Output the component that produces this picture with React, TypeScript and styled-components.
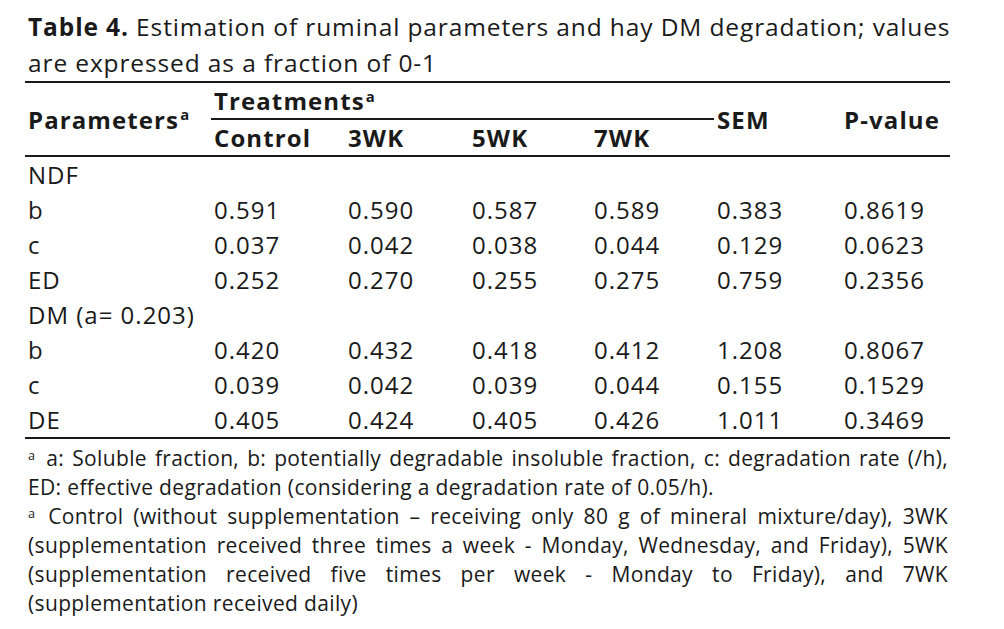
import styled, { createGlobalStyle } from "styled-components";

const GlobalStyle = createGlobalStyle`
  html, body {
    margin: 0;
    padding: 0;
    background: #ffffff;
  }
  body {
    font-family: "Open Sans", "Liberation Sans", sans-serif;
    color: #1a1a1a;
  }
`;

const Page = styled.div`
  width: 925px;
  padding: 9px 0 0 25px;
`;

const Caption = styled.p`
  margin: 0;
  padding-left: 3px;
  font-size: 24.5px;
  line-height: 36px;
  letter-spacing: 0.88px;
  white-space: nowrap;
  border-bottom: 2px solid #1a1a1a;
  b {
    font-weight: 700;
  }
`;

const Table = styled.table`
  width: 925px;
  border-collapse: collapse;
  table-layout: fixed;
  font-size: 24px;
  line-height: 35px;
  letter-spacing: 1px;
  border-bottom: 2px solid #1a1a1a;
`;

const HeadCell = styled.th<{ $rule?: boolean; $tall?: boolean }>`
  padding: 0 0 0 3px;
  text-align: left;
  font-weight: 700;
  letter-spacing: 1.1px;
  white-space: nowrap;
  vertical-align: ${(p) => (p.$tall ? "middle" : "top")};
  height: ${(p) => (p.$tall ? "auto" : "35px")};
  border-bottom: ${(p) => (p.$rule ? "2px solid #1a1a1a" : "none")};
`;

const Cell = styled.td`
  padding: 0 0 0 3px;
  height: 35px;
  white-space: nowrap;
  vertical-align: top;
`;

const Sup = styled.sup`
  font-size: 0.62em;
  line-height: 0;
  vertical-align: 0.55em;
  margin-left: 1px;
`;

const HeadRow = styled.tr<{ $first?: boolean }>`
  height: ${(p) => (p.$first ? "36px" : "35px")};
`;

const Notes = styled.div`
  padding: 5px 2px 0 3px;
  font-size: 21px;
  line-height: 29px;
  letter-spacing: 0.35px;
`;

const Note = styled.p`
  margin: 0;
  text-align: justify;
`;

const NoteMark = styled.span`
  font-size: 0.6em;
  vertical-align: 0.5em;
  line-height: 0;
  margin-right: 3px;
`;

const widths = [186, 134, 124, 122, 123, 127, 109];

type Row = { label: string; values?: string[] };

const rows: Row[] = [
  { label: "NDF" },
  { label: "b", values: ["0.591", "0.590", "0.587", "0.589", "0.383", "0.8619"] },
  { label: "c", values: ["0.037", "0.042", "0.038", "0.044", "0.129", "0.0623"] },
  { label: "ED", values: ["0.252", "0.270", "0.255", "0.275", "0.759", "0.2356"] },
  { label: "DM (a= 0.203)" },
  { label: "b", values: ["0.420", "0.432", "0.418", "0.412", "1.208", "0.8067"] },
  { label: "c", values: ["0.039", "0.042", "0.039", "0.044", "0.155", "0.1529"] },
  { label: "DE", values: ["0.405", "0.424", "0.405", "0.426", "1.011", "0.3469"] },
];

export default function App() {
  return (
    <>
      <GlobalStyle />
      <Page>
        <Caption>
          <b>Table 4.</b> Estimation of ruminal parameters and hay DM degradation; values
          <br />
          are expressed as a fraction of 0-1
        </Caption>
        <Table>
          <colgroup>
            {widths.map((w, i) => (
              <col key={i} style={{ width: w }} />
            ))}
          </colgroup>
          <thead>
            <HeadRow $first>
              <HeadCell rowSpan={2} $tall $rule>
                Parameters<Sup>a</Sup>
              </HeadCell>
              <HeadCell colSpan={4} $rule>
                Treatments<Sup>a</Sup>
              </HeadCell>
              <HeadCell rowSpan={2} $tall $rule>
                SEM
              </HeadCell>
              <HeadCell rowSpan={2} $tall $rule>
                P-value
              </HeadCell>
            </HeadRow>
            <HeadRow>
              <HeadCell $rule>Control</HeadCell>
              <HeadCell $rule>3WK</HeadCell>
              <HeadCell $rule>5WK</HeadCell>
              <HeadCell $rule>7WK</HeadCell>
            </HeadRow>
          </thead>
          <tbody>
            {rows.map((r, i) => (
              <tr key={i}>
                {r.values ? (
                  <>
                    <Cell>{r.label}</Cell>
                    {r.values.map((v, j) => (
                      <Cell key={j}>{v}</Cell>
                    ))}
                  </>
                ) : (
                  <Cell colSpan={7}>{r.label}</Cell>
                )}
              </tr>
            ))}
          </tbody>
        </Table>
        <Notes>
          <Note>
            <NoteMark>a</NoteMark> a: Soluble fraction, b: potentially degradable insoluble
            fraction, c: degradation rate (/h), ED: effective degradation (considering a
            degradation rate of 0.05/h).
          </Note>
          <Note>
            <NoteMark>a</NoteMark> Control (without supplementation – receiving only 80 g of
            mineral mixture/day), 3WK (supplementation received three times a week - Monday,
            Wednesday, and Friday), 5WK (supplementation received five times per week - Monday
            to Friday), and 7WK (supplementation received daily)
          </Note>
        </Notes>
      </Page>
    </>
  );
}
